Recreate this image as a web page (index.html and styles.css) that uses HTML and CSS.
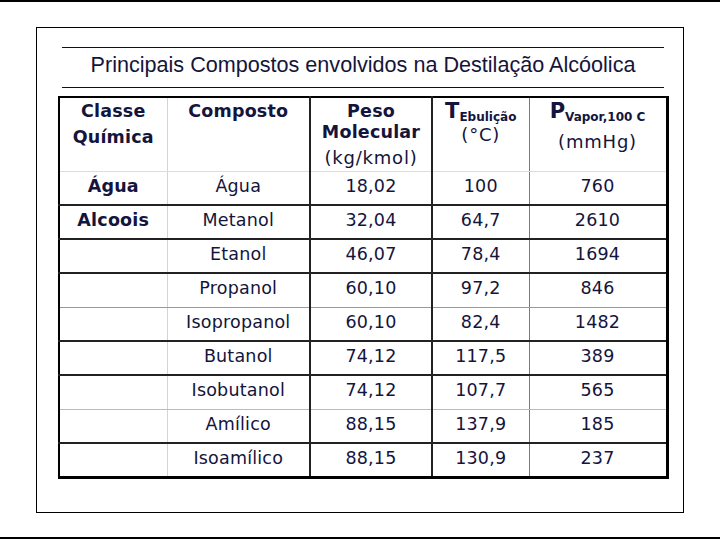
FILE: index.html
```html
<!DOCTYPE html>
<html lang="pt">
<head>
<meta charset="utf-8">
<title>Principais Compostos envolvidos na Destilação Alcóolica</title>
<link rel="stylesheet" href="styles.css">
</head>
<body>
<div class="page">
  <div class="bar"></div>
  <div class="frame">
    <div class="title">Principais Compostos envolvidos na Destilação Alcóolica</div>
    <table class="grid">
      <colgroup>
        <col class="c1"><col class="c2"><col class="c3"><col class="c4"><col class="c5">
      </colgroup>
      <thead>
        <tr class="head">
          <th class="v-lite classe">Classe<br>Química</th>
          <th class="v-dark">Composto</th>
          <th class="v-dark">Peso<br>Molecular<br><span class="unit unit-kg">(kg/kmol)</span></th>
          <th class="v-grey"><span class="big">T</span><span class="sub">Ebulição</span><br><span class="unit unit-c">(°C)</span></th>
          <th><span class="big">P</span><span class="sub">Vapor,100 C</span><br><span class="unit unit-mm">(mmHg)</span></th>
        </tr>
      </thead>
      <tbody>
        <tr class="h-dark"><td class="cls v-lite">Água</td><td class="v-dark">Água</td><td class="v-dark">18,02</td><td class="v-grey">100</td><td>760</td></tr>
        <tr class="h-dark"><td class="cls v-lite">Alcoois</td><td class="v-dark">Metanol</td><td class="v-dark">32,04</td><td class="v-grey">64,7</td><td>2610</td></tr>
        <tr class="h-dark"><td class="v-lite"></td><td class="v-dark">Etanol</td><td class="v-dark">46,07</td><td class="v-grey">78,4</td><td>1694</td></tr>
        <tr class="h-grey"><td class="v-lite"></td><td class="v-dark">Propanol</td><td class="v-dark">60,10</td><td class="v-grey">97,2</td><td>846</td></tr>
        <tr class="h-dark"><td class="v-lite"></td><td class="v-dark">Isopropanol</td><td class="v-dark">60,10</td><td class="v-grey">82,4</td><td>1482</td></tr>
        <tr class="h-dark"><td class="v-lite"></td><td class="v-dark">Butanol</td><td class="v-dark">74,12</td><td class="v-grey">117,5</td><td>389</td></tr>
        <tr class="h-lite"><td class="v-lite"></td><td class="v-dark">Isobutanol</td><td class="v-dark">74,12</td><td class="v-grey">107,7</td><td>565</td></tr>
        <tr class="h-dark"><td class="v-lite"></td><td class="v-dark">Amílico</td><td class="v-dark">88,15</td><td class="v-grey">137,9</td><td>185</td></tr>
        <tr class="last"><td class="v-lite"></td><td class="v-dark">Isoamílico</td><td class="v-dark">88,15</td><td class="v-grey">130,9</td><td>237</td></tr>
      </tbody>
    </table>
  </div>
  <div class="bar bar-bottom"></div>
</div>
</body>
</html>
```
FILE: styles.css
```css
* { box-sizing: border-box; }
html, body { margin: 0; padding: 0; background: #fff; }
.page {
  width: 720px;
  height: 540px;
  display: flex;
  flex-direction: column;
  overflow: hidden;
}
.bar { height: 2px; background: #000; flex: none; }
.bar-bottom { margin-top: 24px; }
.frame {
  margin: 25px 0 0 36px;
  width: 648px;
  height: 486px;
  border: 1px solid #000;
  padding: 19px 19px 0 21px;
  flex: none;
}
.title {
  margin-left: 4px;
  border-top: 1px solid #111;
  border-bottom: 1px solid #111;
  height: 41px;
  text-align: center;
  font-family: "Liberation Sans", Arial, sans-serif;
  font-size: 21.6px;
  line-height: 34px;
  color: #15153a;
}
.grid {
  margin-top: 8px;
  width: 608px;
  table-layout: fixed;
  border-collapse: collapse;
  border-left: 2px solid #000;
  border-top: 2px solid #000;
  border-right: 3px solid #000;
  border-bottom: 3px solid #000;
  font-family: "DejaVu Sans", Verdana, sans-serif;
  color: #14143c;
}
.c1 { width: 108px; }
.c2 { width: 143px; }
.c3 { width: 122px; }
.c4 { width: 97px; }
.c5 { width: 138px; }
th, td { padding: 0; text-align: center; }
th {
  height: 74px;
  vertical-align: top;
  font-size: 17.5px;
  font-weight: bold;
  line-height: 21px;
  padding-top: 3px;
  border-bottom: 1px solid #ddd;
  letter-spacing: 0.2px;
}
th.classe { line-height: 26px; padding-top: 0; }
td {
  height: 34px;
  font-size: 17.5px;
  line-height: 20px;
  vertical-align: middle;
  padding-bottom: 4px;
  letter-spacing: 0.2px;
}
td.cls { font-weight: bold; }
.v-lite { border-right: 1px solid #d4d4d4; }
.v-dark { border-right: 2px solid #222; }
.v-grey { border-right: 1px solid #7a7a7a; }
.h-dark td { border-bottom: 2px solid #222; }
.h-grey td { border-bottom: 1px solid #999; }
.h-lite td { border-bottom: 1px solid #bbb; }
.unit { font-weight: normal; font-size: 18px; letter-spacing: 0.8px; display: inline-block; }
.unit-kg { margin-top: 4px; }
.unit-c { margin-top: -4px; line-height: 20px; }
.unit-mm { margin-top: 6px; }
.big { font-size: 21px; letter-spacing: 0; }
.sub { font-size: 12px; position: relative; top: 3px; letter-spacing: 0; }
```
